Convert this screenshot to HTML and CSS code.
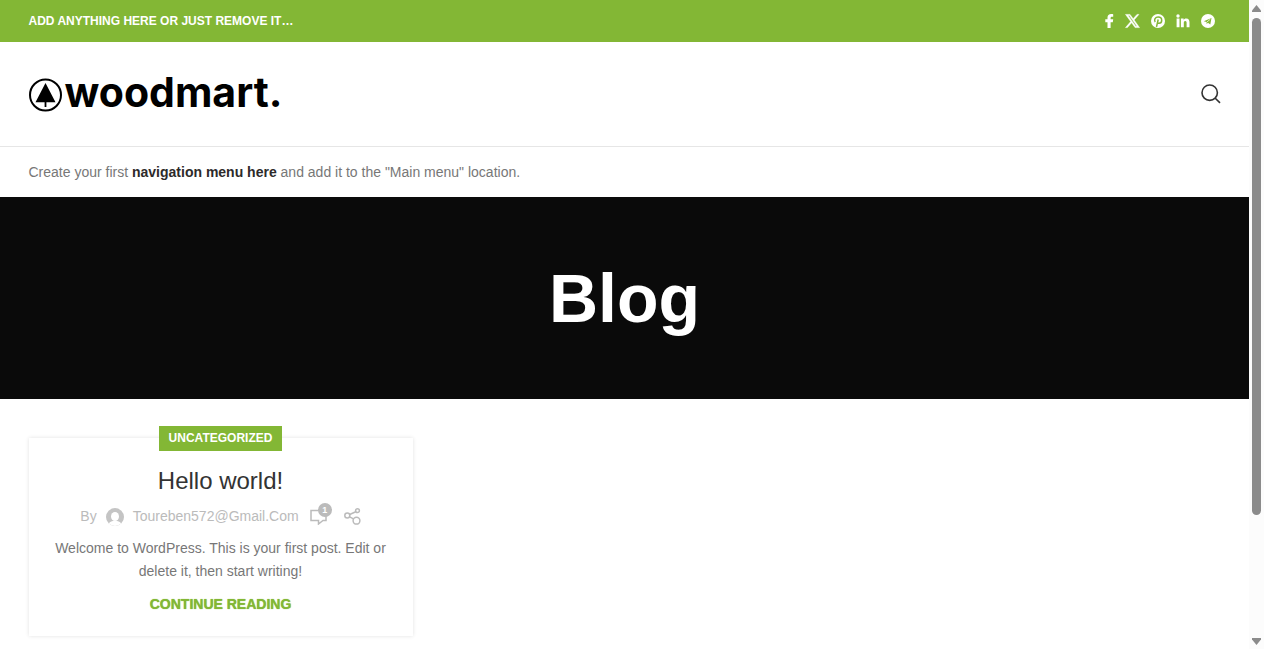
FILE: index.html
```html
<!DOCTYPE html>
<html lang="en">
<head>
<meta charset="utf-8">
<meta name="viewport" content="width=device-width, initial-scale=1">
<title>Blog</title>
<link rel="stylesheet" href="styles.css">
</head>
<body>
<div class="page">
  <header class="header">
    <div class="topbar">
      <div class="container topbar-row">
        <strong class="topbar-text">ADD ANYTHING HERE OR JUST REMOVE IT…</strong>
        <nav class="socials" aria-label="Social links">
          <a href="#" aria-label="Facebook"><svg class="icon-fb" viewBox="0 0 9 14"><path d="M2.500 14V8.200H.3V5.200h2.200V3.600C2.500 1.200 3.900 0 6.100 0c1 0 2.100.2 2.100.2v2.500H7c-1.100 0-1.400.6-1.400 1.300v1.200h2.600l-.4 3H5.600V14z"/></svg></a>
          <a href="#" aria-label="X"><svg class="icon-x" viewBox="0 0 14 14"><path fill-rule="evenodd" d="M0 .4h4.500l3.200 4.300L11.500.4h1.900L8.600 5.900 14 13.600H9.600L6.100 8.700 1.900 13.600H0l5.200-6zM2.600 1.600l7.600 10.700h1.300L3.900 1.600z"/></svg></a>
          <a href="#" aria-label="Pinterest"><svg viewBox="0 0 14 14"><circle cx="7" cy="7" r="7"/><path class="cut-line" d="M4.200 8C2.600 5.600 4.400 3 7.100 3c2.200 0 3.600 1.300 3.600 3.200S9.400 9.300 8 9.300c-.8 0-1.200-.4-1.400-.8M7.200 5.500 5.500 12.800"/></svg></a>
          <a href="#" aria-label="LinkedIn"><svg viewBox="0 0 14 14"><circle cx="2" cy="2" r="1.700"/><path d="M.6 4.600h2.900v8.600H.6zM4.900 4.600h2.700v1.200c.4-.7 1.200-1.400 2.600-1.400 2.700 0 3.300 1.700 3.300 4.100v4.700h-2.900V9c0-1.100-.1-2.100-1.300-2.100S7.800 7.800 7.800 8.900v4.300H4.900z"/></svg></a>
          <a href="#" aria-label="Telegram"><svg viewBox="0 0 14 14"><circle cx="7" cy="7" r="7"/><path class="cut" d="M2.800 7.200 10.500 4 9.300 10.400 6.900 8.800 5.700 10.100 5.500 8z"/><path class="plane-fold" d="M5.700 8.200 9.300 5.200"/></svg></a>
        </nav>
      </div>
    </div>
    <div class="mainbar">
      <div class="container mainbar-row">
        <a class="logo" href="#">
          <svg class="logo-mark" viewBox="0 0 34 34" aria-hidden="true"><circle cx="16.500" cy="17" r="15.500"/><path d="M16.500 5 26.500 24.200H17.400V29H15.600V24.200H6.500z"/></svg>
          <span class="logo-text">woodmart.</span>
        </a>
        <button class="search" type="button" aria-label="Search"><svg viewBox="0 0 20 20"><circle cx="8.700" cy="8.700" r="7.700"/><path d="M14 14l5 4.800"/></svg></button>
      </div>
    </div>
    <div class="navbar">
      <p class="container nav-note">Create your first <a href="#">navigation menu here</a> and add it to the "Main menu" location.</p>
    </div>
  </header>
  <div class="page-title"><h1>Blog</h1></div>
  <main class="container posts">
    <article class="post">
      <a class="category" href="#">UNCATEGORIZED</a>
      <h2 class="post-title"><a href="#">Hello world!</a></h2>
      <div class="meta">
        <span>By</span>
        <svg class="avatar" viewBox="0 0 18 18" aria-hidden="true"><circle class="avatar-bg" cx="9" cy="9" r="9"/><ellipse cx="9" cy="8.500" rx="4" ry="4.500"/><path d="M2.800 15.500C4 13.500 6 13 9 13s5 .5 6.200 2.500A9 9 0 0 1 9 18a9 9 0 0 1-6.200-2.500z"/></svg>
        <a class="author" href="#">Toureben572@Gmail.Com</a>
        <a class="comments" href="#" aria-label="1 comment"><svg viewBox="0 0 18 16"><path d="M1 1.500h15v10h-3L8.500 15v-3.500H1z"/></svg><span class="count">1</span></a>
        <button class="share" type="button" aria-label="Share"><svg viewBox="0 0 17 17"><circle cx="3.300" cy="7.500" r="2.500"/><circle cx="13.500" cy="2.700" r="1.900"/><circle cx="12.500" cy="12.700" r="3.400"/><path d="M5.700 6.500l6-2.800M5.600 8.800l3.900 2"/></svg></button>
      </div>
      <p class="excerpt">Welcome to WordPress. This is your first post. Edit or delete it, then start writing!</p>
      <a class="more" href="#">CONTINUE READING</a>
    </article>
  </main>
</div>
<div class="scrollbar" aria-hidden="true">
  <svg class="arrow" viewBox="0 0 9 7"><path d="M4.500 0 9 5.500V7H0V5.500z"/></svg>
  <div class="track"><div class="thumb"></div></div>
  <svg class="arrow" viewBox="0 0 9 7"><path d="M4.500 7 9 1.500V0H0v1.500z"/></svg>
</div>
</body>
</html>
```
FILE: styles.css
```css
* { box-sizing: border-box; }
body {
  margin: 0;
  display: grid;
  grid-template-columns: minmax(0, 1fr) 15px;
  font: 14px/23px "Liberation Sans", Arial, sans-serif;
  color: #777;
  background: #fff;
}
h1, h2, p { margin: 0; }
a { color: inherit; text-decoration: none; }
button { border: 0; padding: 0; background: none; cursor: pointer; }
svg { display: block; }
.container { width: 100%; max-width: 1222px; margin: 0 auto; padding: 0 15px; }

.topbar { background: #83b735; color: #fff; }
.topbar-row { display: flex; align-items: center; justify-content: space-between; min-height: 42px; }
.topbar-text { font-size: 12px; }
.socials { display: flex; align-items: center; gap: 11px; padding-right: 6px; }
.socials svg { width: 14px; height: 14px; fill: #fff; }
.socials .icon-fb { width: 9px; }
.socials .icon-x { width: 15px; stroke: #fff; stroke-width: .5; overflow: visible; }
.socials .cut { fill: #83b735; }
.socials .cut-line { fill: none; stroke: #83b735; stroke-width: 1.500; }
.socials .plane-fold { stroke: #fff; stroke-width: .7; }

.mainbar { border-bottom: 1px solid #e6e6e6; }
.mainbar-row { display: flex; align-items: center; justify-content: space-between; min-height: 104px; }
.logo { display: flex; align-items: center; gap: 2px; color: #000; }
.logo-mark { width: 34px; height: 34px; margin-top: 2px; }
.logo-mark circle { fill: none; stroke: #000; stroke-width: 2; }
.logo-text { padding-bottom: 5px; font: 700 41px/48px Inter, sans-serif; }
.search svg { width: 20px; height: 20px; fill: none; stroke: #333; stroke-width: 1.600; }

.navbar { padding: 14px 0 13px; }
.nav-note a { color: #2d2a2a; font-weight: 700; }

.page-title { padding: 60px 15px; background: #0a0a0a; color: #fff; text-align: center; }
.page-title h1 { font-size: 68px; line-height: 82px; }

.posts { display: grid; grid-template-columns: repeat(3, 1fr); gap: 20px; padding-top: 39px; padding-bottom: 12px; }
.post {
  display: flex;
  flex-direction: column;
  align-items: center;
  padding: 0 20px 20px;
  text-align: center;
  background: #fff;
  box-shadow: 0 0 4px rgba(0, 0, 0, .12);
}
.category { margin-top: -12px; padding: 0 10px; background: #83b735; color: #fff; font-size: 12px; font-weight: 700; line-height: 25px; }
.post-title { margin-top: 13px; font-size: 24px; font-weight: 400; line-height: 34px; color: #333; }
.meta { display: flex; align-items: center; margin-top: 7px; color: #bbb; }
.avatar { width: 18px; height: 18px; margin: 0 9px; fill: #fff; }
.avatar-bg { fill: #c4c4c4; }
.comments { position: relative; margin: 0 16px 0 11px; }
.comments svg { width: 18px; height: 16px; fill: none; stroke: #bbb; stroke-width: 1.500; }
.count { position: absolute; top: -6px; right: -4px; width: 14px; height: 14px; border-radius: 50%; background: #bbb; color: #fff; font-size: 9px; font-weight: 700; line-height: 14px; text-align: center; }
.share svg { width: 17px; height: 17px; fill: none; stroke: #bbb; stroke-width: 1.500; }
.excerpt { margin-top: 9px; }
.more { margin-top: 10px; color: #83b735; font-weight: 700; text-shadow: 0 0 1px #83b735; }

.scrollbar { position: sticky; top: 0; height: 100vh; padding: 5px 3px 4px; display: flex; flex-direction: column; background: #fcfcfc; }
.arrow { width: 9px; height: 7px; fill: #8b8b8b; }
.track { flex: 1; padding: 6px 0; }
.thumb { height: 81%; border-radius: 5px; background: #8b8b8b; }
```
